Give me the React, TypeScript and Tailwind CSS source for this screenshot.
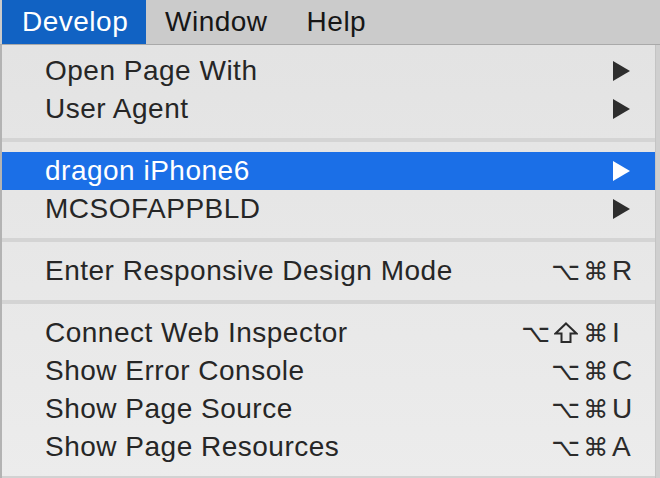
import React from "react";

const Arrow = ({ white }: { white?: boolean }) => (
  <svg width="17" height="20" viewBox="0 0 17 20" className="block">
    <polygon points="0,0 17,10 0,20" fill={white ? "#ffffff" : "#2e2e2e"} />
  </svg>
);

const ShiftIcon = () => (
  <svg width="24" height="22" viewBox="0 0 24 22" className="block">
    <path
      d="M12 1.5 L22.5 11.5 L16.5 11.5 L16.5 20 L7.5 20 L7.5 11.5 L1.5 11.5 Z"
      fill="none"
      stroke="#2b2b2b"
      strokeWidth="2"
      strokeLinejoin="miter"
    />
  </svg>
);

const Shortcut = ({ mods, letter, white }: { mods: string[]; letter: string; white?: boolean }) => (
  <div className={`flex items-center ${white ? "text-white" : "text-[#2b2b2b]"}`}>
    {mods.map((m, i) =>
      m === "shift" ? (
        <span key={i} className="flex w-[30px] justify-center">
          <ShiftIcon />
        </span>
      ) : (
        <span
          key={i}
          className="w-[30px] text-center text-[25px] leading-none"
          style={{ fontFamily: '"DejaVu Sans", sans-serif' }}
        >
          {m}
        </span>
      )
    )}
    <span className="w-[24px] pl-[1px] text-left">{letter}</span>
  </div>
);

type Item = { label: string; arrow?: boolean; selected?: boolean; mods?: string[]; letter?: string };

const Row = ({ item }: { item: Item }) => (
  <div
    className={`flex h-[38px] items-center pl-[43px] pr-[20px] ${
      item.selected ? "bg-[#1b6fe7] text-white" : "text-[#262626]"
    }`}
  >
    <span className="flex-1 whitespace-nowrap">{item.label}</span>
    {item.arrow && (
      <div className="pr-[5px]">
        <Arrow white={item.selected} />
      </div>
    )}
    {item.mods && <Shortcut mods={item.mods} letter={item.letter || ""} white={item.selected} />}
  </div>
);

const Sep = () => (
  <div className="py-[10px]">
    <div className="h-[4px] bg-[#d4d4d4]" />
  </div>
);

export default function App() {
  const font = { fontFamily: '"Liberation Sans", Arial, sans-serif' };
  return (
    <div className="relative h-[478px] w-[660px] overflow-hidden bg-[#c9c9c9]" style={font}>
      {/* menu bar */}
      <div className="flex h-[45px] items-center border-b border-[#a9a9a9] bg-[#cbcbcb] text-[28px] tracking-[0.5px] text-[#161616]">
        <div className="ml-[2px] flex h-full w-[144px] items-center bg-[#1162c3] pl-[20px] text-white">
          Develop
        </div>
        <div className="ml-[19px]">Window</div>
        <div className="ml-[39px]">Help</div>
      </div>
      <div className="flex h-[433px]">
        <div className="w-[2px] bg-[#b3b3b3]" />
        {/* menu */}
        <div className="flex w-[654px] flex-col border-r border-[#c4c4c4] bg-gradient-to-b from-[#e3e3e3] to-[#ececec] pt-[7px] text-[28px] tracking-[0.5px]">
          <Row item={{ label: "Open Page With", arrow: true }} />
          <Row item={{ label: "User Agent", arrow: true }} />
          <Sep />
          <Row item={{ label: "dragon iPhone6", arrow: true, selected: true }} />
          <Row item={{ label: "MCSOFAPPBLD", arrow: true }} />
          <Sep />
          <Row item={{ label: "Enter Responsive Design Mode", mods: ["⌥", "⌘"], letter: "R" }} />
          <Sep />
          <Row item={{ label: "Connect Web Inspector", mods: ["⌥", "shift", "⌘"], letter: "I" }} />
          <Row item={{ label: "Show Error Console", mods: ["⌥", "⌘"], letter: "C" }} />
          <Row item={{ label: "Show Page Source", mods: ["⌥", "⌘"], letter: "U" }} />
          <Row item={{ label: "Show Page Resources", mods: ["⌥", "⌘"], letter: "A" }} />
          <div className="flex-1" />
          <div className="h-[2px] bg-[#d2d2d2]" />
        </div>
        <div className="flex-1 bg-[#cfcfcf]" />
      </div>
    </div>
  );
}
